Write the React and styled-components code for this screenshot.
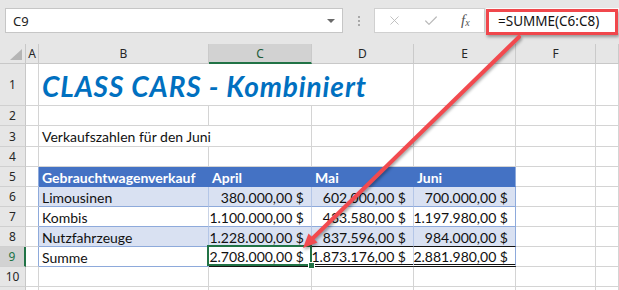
import React from "react";
import styled, {createGlobalStyle, css} from "styled-components";
import {X, Check} from "lucide-react";

const GlobalStyle = createGlobalStyle`
  html, body {
    margin: 0;
    padding: 0;
    background: #ffffff;
  }
  body {
    font-family: "Noto Sans", sans-serif;
  }
`;

const Window = styled.div`
  position: relative;
  width: 619px;
  height: 290px;
  overflow: hidden;
  background: #ffffff;
`;

// ---- formula bar ----
const FormulaBar = styled.div`
  display: flex;
  align-items: flex-start;
  height: 44px;
  box-sizing: border-box;
  padding: 8px 0 0 5px;
  background: #e6e6e6;
`;

const NameBox = styled.div`
  display: flex;
  align-items: center;
  justify-content: space-between;
  width: 338px;
  height: 25px;
  box-sizing: border-box;
  padding: 0 7px 0 7px;
  background: #ffffff;
  border: 1px solid #c6c6c6;
  font-size: 13px;
  color: #222;
`;

const DropArrow = styled.span`
  width: 0;
  height: 0;
  border-left: 4px solid transparent;
  border-right: 4px solid transparent;
  border-top: 4px solid #6a6a6a;
`;

const Grip = styled.div`
  display: flex;
  flex-direction: column;
  gap: 2px;
  width: 31px;
  align-items: center;
  padding-top: 8px;
  span {
    width: 2px;
    height: 2px;
    background: #a8a8a8;
  }
`;

const FxBox = styled.div`
  display: flex;
  align-items: center;
  width: 111px;
  height: 25px;
  box-sizing: border-box;
  background: #ffffff;
  border: 1px solid #d0d0d0;
  padding-left: 12px;
  gap: 21px;
  color: #b9b9b9;
`;

const FxLabel = styled.span`
  font-family: "Liberation Serif", serif;
  font-style: italic;
  font-size: 15px;
  color: #555;
  margin-left: 1px;
  sub {
    font-size: 10px;
    vertical-align: -1px;
  }
`;

const FormulaInput = styled.div`
  flex: 1;
  height: 25px;
  margin-left: 1px;
  display: flex;
  align-items: center;
  padding-left: 12px;
  background: #ffffff;
  font-size: 13.5px;
  color: #111;
`;

const Highlight = styled.div`
  position: absolute;
  left: 486px;
  top: 9px;
  width: 132px;
  height: 26px;
  box-sizing: border-box;
  border: 3px solid #f0474c;
  box-shadow: 1px 2px 3px rgba(0, 0, 0, 0.35);
`;

// ---- sheet ----
const Sheet = styled.div`
  display: grid;
  grid-template-columns: 26px 13px 170px 103px 102px 102px 80px 1fr;
  grid-template-rows: 20px 42px 20px 21px 20px 20px 20px 20px 20px 20px 20px 20px;
`;

const Corner = styled.div`
  position: relative;
  background: #e6e6e6;
  border-right: 1px solid #c8c8c8;
  border-bottom: 1px solid #c8c8c8;
  &::after {
    content: "";
    position: absolute;
    right: 3px;
    bottom: 3px;
    border-left: 12px solid transparent;
    border-bottom: 11px solid #b5b5b5;
  }
`;

const ColHead = styled.div`
  display: flex;
  align-items: center;
  justify-content: center;
  box-sizing: border-box;
  background: ${p => (p.$active ? "#d2d2d2" : "#e6e6e6")};
  border-right: 1px solid #cacaca;
  border-bottom: ${p => (p.$active ? "2px solid #217346" : "1px solid #c8c8c8")};
  font-size: 12px;
  color: ${p => (p.$active ? "#1d5c38" : "#262626")};
`;

const RowHead = styled.div`
  display: flex;
  align-items: center;
  justify-content: center;
  box-sizing: border-box;
  background: ${p => (p.$active ? "#d2d2d2" : "#e6e6e6")};
  border-right: ${p => (p.$active ? "2px solid #217346" : "1px solid #c8c8c8")};
  border-bottom: 1px solid #d0d0d0;
  font-size: 12px;
  color: ${p => (p.$active ? "#217346" : "#262626")};
`;

const tableLine = "#8eaadb";

const Cell = styled.div`
  position: relative;
  display: flex;
  align-items: center;
  justify-content: ${p => (p.$num ? "flex-end" : "flex-start")};
  box-sizing: border-box;
  padding: 1px ${p => (p.$num ? "7px" : "3px")} 0 3px;
  border-right: 1px solid #d4d4d4;
  border-bottom: 1px solid #d4d4d4;
  font-family: Lato, "Liberation Sans", sans-serif;
  font-size: 14px;
  color: #111;
  white-space: nowrap;
  grid-column: ${p => (p.$span ? `span ${p.$span}` : "auto")};

  ${p => p.$kind === "head" && css`
    background: #4472c4;
    color: #ffffff;
    font-weight: 700;
    border-right-color: #4472c4;
    border-bottom-color: #4472c4;
  `}
  ${p => p.$kind === "band" && css`
    background: #d9e1f2;
    border-right-color: #b4c6e7;
    border-bottom-color: ${tableLine};
  `}
  ${p => p.$kind === "plain" && css`
    border-right-color: #c9d3e6;
    border-bottom-color: ${tableLine};
  `}
  ${p => p.$kind === "sum" && css`
    border-right-color: #c9d3e6;
    border-bottom: 3px double #111;
    border-top: 1px solid #111;
    margin-top: -1px;
  `}
  ${p => p.$last && css`
    border-right-color: ${tableLine};
  `}
  ${p => p.$edge && css`
    border-right-color: ${tableLine};
  `}
  ${p => p.$selected && css`
    &::after {
      content: "";
      position: absolute;
      top: -2px;
      left: -2px;
      right: -1px;
      bottom: -2px;
      border: 2px solid #217346;
    }
    &::before {
      content: "";
      position: absolute;
      right: -4px;
      bottom: -5px;
      width: 5px;
      height: 5px;
      background: #217346;
      border: 1px solid #ffffff;
      z-index: 2;
    }
  `}
`;

const Title = styled(Cell)`
  font-size: 28px;
  font-weight: 700;
  font-style: italic;
  letter-spacing: 0.9px;
  color: #0070c0;
  padding-top: 3px;
`;

const Callout = styled.svg`
  position: absolute;
  left: 0;
  top: 0;
  pointer-events: none;
  filter: drop-shadow(1px 2px 1.5px rgba(0, 0, 0, 0.35));
`;

const columns = ["A", "B", "C", "D", "E", "F", ""];

const tableRows = [
  {n: 5, kind: "head", cells: ["Gebrauchtwagenverkauf", "April", "Mai", "Juni"]},
  {n: 6, kind: "band", cells: ["Limousinen", "380.000,00 $", "602.000,00 $", "700.000,00 $"]},
  {n: 7, kind: "plain", cells: ["Kombis", "1.100.000,00 $", "433.580,00 $", "1.197.980,00 $"]},
  {n: 8, kind: "band", cells: ["Nutzfahrzeuge", "1.228.000,00 $", "837.596,00 $", "984.000,00 $"]},
  {n: 9, kind: "sum", cells: ["Summe", "2.708.000,00 $", "1.873.176,00 $", "2.881.980,00 $"]},
];

function Blank({count}) {
  return Array.from({length: count}, (_, i) => <Cell key={i}/>);
}

export default function App() {
  return (
    <Window>
      <GlobalStyle/>
      <FormulaBar>
        <NameBox>
          <span>C9</span>
          <DropArrow/>
        </NameBox>
        <Grip><span/><span/><span/></Grip>
        <FxBox>
          <X size={15} strokeWidth={1.4}/>
          <Check size={16} strokeWidth={1.8}/>
          <FxLabel>f<sub>x</sub></FxLabel>
        </FxBox>
        <FormulaInput>=SUMME(C6:C8)</FormulaInput>
      </FormulaBar>

      <Sheet>
        <Corner/>
        {columns.map((c, i) => (
          <ColHead key={i} $active={c === "C"}>{c}</ColHead>
        ))}

        <RowHead>1</RowHead>
        <Cell/>
        <Title $span={3}>CLASS CARS - Kombiniert</Title>
        <Blank count={3}/>

        <RowHead>2</RowHead>
        <Blank count={7}/>

        <RowHead>3</RowHead>
        <Cell/>
        <Cell $span={2}>Verkaufszahlen für den Juni</Cell>
        <Blank count={4}/>

        <RowHead>4</RowHead>
        <Blank count={7}/>

        {tableRows.map(row => (
          <React.Fragment key={row.n}>
            <RowHead $active={row.n === 9}>{row.n}</RowHead>
            <Cell $edge/>
            {row.cells.map((text, i) => (
              <Cell
                key={i}
                $kind={row.kind === "sum" && i === 0 ? "plain" : row.kind}
                $num={row.kind !== "head" && i > 0}
                $last={i === 3}
                $selected={row.n === 9 && i === 1}
              >
                {text}
              </Cell>
            ))}
            <Blank count={2}/>
          </React.Fragment>
        ))}

        <RowHead>10</RowHead>
        <Blank count={7}/>
        {/* row 11 only peeks in at the bottom edge */}
        <RowHead/>
        <Blank count={7}/>
      </Sheet>

      <Highlight/>
      <Callout width="619" height="290" viewBox="0 0 619 290">
        <line x1="519" y1="37" x2="311" y2="240" stroke="#f24a4f" strokeWidth="4" strokeLinecap="round"/>
        <polygon points="303,248 317.5,242.5 308.5,233.5" fill="#f24a4f"/>
      </Callout>
    </Window>
  );
}
